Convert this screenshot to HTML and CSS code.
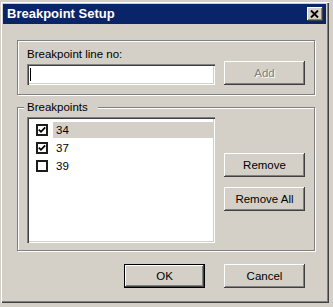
FILE: index.html
```html
<!DOCTYPE html>
<html>
<head>
<meta charset="utf-8">
<link rel="stylesheet" href="styles.css">
</head>
<body>
<div class="window">
  <div class="titlebar">
    <span class="title">Breakpoint Setup</span>
    <div class="close">
      <svg width="9" height="8" viewBox="0 0 9 8"><path d="M1 0.5 L8 7.5 M8 0.5 L1 7.5" stroke="#000" stroke-width="1.9" fill="none"/></svg>
    </div>
  </div>
  <div class="content">
    <div class="group group-line">
      <div class="label">Breakpoint line no:</div>
      <div class="line-row">
        <div class="input"><span class="caret"></span></div>
        <div class="btn disabled">Add</div>
      </div>
    </div>
    <div class="group group-list">
      <span class="legend">Breakpoints</span>
      <div class="list-row">
        <div class="list">
          <div class="item">
            <span class="cb"><svg width="8" height="8" viewBox="0 0 8 8"><path d="M0.8 3.6 L3 5.8 L7.2 1.4" stroke="#000" stroke-width="1.8" fill="none"/></svg></span>
            <span class="txt sel">34</span>
          </div>
          <div class="item">
            <span class="cb"><svg width="8" height="8" viewBox="0 0 8 8"><path d="M0.8 3.6 L3 5.8 L7.2 1.4" stroke="#000" stroke-width="1.8" fill="none"/></svg></span>
            <span class="txt">37</span>
          </div>
          <div class="item">
            <span class="cb"></span>
            <span class="txt">39</span>
          </div>
        </div>
        <div class="side">
          <div class="btn">Remove</div>
          <div class="btn">Remove All</div>
        </div>
      </div>
    </div>
    <div class="footer">
      <div class="btn default">OK</div>
      <div class="btn">Cancel</div>
    </div>
  </div>
</div>
</body>
</html>
```

FILE: styles.css
```css
html, body {
  margin: 0;
  padding: 0;
  background: #d4d0c8;
}
body {
  font-family: "Liberation Sans", Arial, sans-serif;
  font-size: 11.5px;
  color: #000;
  width: 333px;
  height: 307px;
  overflow: hidden;
}
.window {
  margin-top: 1px;
  width: 329px;
  height: 302px;
  box-sizing: border-box;
  padding: 3px;
  background: #d4d0c8;
  box-shadow: inset 1px 1px #d4d0c8, inset 2px 2px #ffffff, inset -1px -1px #404040, inset -2px -2px #808080;
  display: flex;
  flex-direction: column;
}
.titlebar {
  height: 20px;
  background: #0a246a;
  display: flex;
  align-items: center;
  justify-content: space-between;
  padding: 0 3px 0 4px;
}
.title {
  color: #fff;
  font-weight: bold;
  font-size: 13px;
  line-height: 16px;
}
.close {
  width: 16px;
  height: 14px;
  background: #d4d0c8;
  box-shadow: inset -1px -1px #404040, inset 1px 1px #ffffff, inset -2px -2px #808080;
  display: flex;
  align-items: center;
  justify-content: center;
}
.close svg { display: block; margin: -1px 0 0 -1px; }
.content {
  padding: 16px 11px 0 14px;
  display: flex;
  flex-direction: column;
}
.group {
  position: relative;
  box-sizing: border-box;
  border: 1px solid #808080;
  box-shadow: inset 1px 1px #fff, 1px 1px #fff;
}
.group-line {
  height: 55px;
  padding: 6px 9px 0 9px;
}
.label {
  line-height: 14px;
}
.line-row {
  display: flex;
  align-items: flex-end;
  gap: 9px;
}
.input {
  width: 188px;
  height: 21px;
  box-sizing: border-box;
  background: #fff;
  box-shadow: inset 1px 1px #808080, inset 2px 2px #404040, inset -1px -1px #fff, inset -2px -2px #d4d0c8;
  position: relative;
}
.caret {
  position: absolute;
  left: 3px;
  top: 4px;
  width: 1px;
  height: 13px;
  background: #000;
}
.btn {
  width: 81px;
  height: 24px;
  box-sizing: border-box;
  background: #d4d0c8;
  box-shadow: inset -1px -1px #404040, inset 1px 1px #ffffff, inset -2px -2px #808080;
  display: flex;
  align-items: center;
  justify-content: center;
  line-height: 14px;
}
.btn.disabled {
  color: #808080;
  text-shadow: 1px 1px #fff;
}
.btn.default {
  border: 1px solid #000;
}
.group-list {
  margin-top: 12px;
  height: 144px;
  padding: 9px 9px 0 9px;
}
.legend {
  position: absolute;
  top: -8px;
  left: 6px;
  line-height: 14px;
  background: #d4d0c8;
  padding: 0 10px 0 3px;
}
.list-row {
  display: flex;
  gap: 9px;
}
.list {
  width: 188px;
  height: 126px;
  box-sizing: border-box;
  background: #fff;
  box-shadow: inset 1px 1px #808080, inset 2px 2px #404040, inset -1px -1px #fff, inset -2px -2px #d4d0c8;
  padding: 4px 2px 2px 2px;
  display: flex;
  flex-direction: column;
}
.item {
  height: 18px;
  display: flex;
  align-items: center;
}
.cb {
  width: 12px;
  height: 12px;
  box-sizing: border-box;
  border: 2px solid #1c1c1c;
  background: #fff;
  margin-left: 7px;
  display: flex;
  align-items: center;
  justify-content: center;
}
.cb svg { display: block; }
.txt {
  flex: 1;
  height: 16px;
  line-height: 16px;
  margin-left: 5px;
  padding-left: 3px;
}
.txt.sel {
  background: #d4d0c8;
}
.side {
  display: flex;
  flex-direction: column;
  gap: 10px;
  margin-top: 36px;
}
.footer {
  margin-top: 13px;
  display: flex;
  justify-content: flex-end;
  gap: 19px;
  padding-right: 10px;
}
```
